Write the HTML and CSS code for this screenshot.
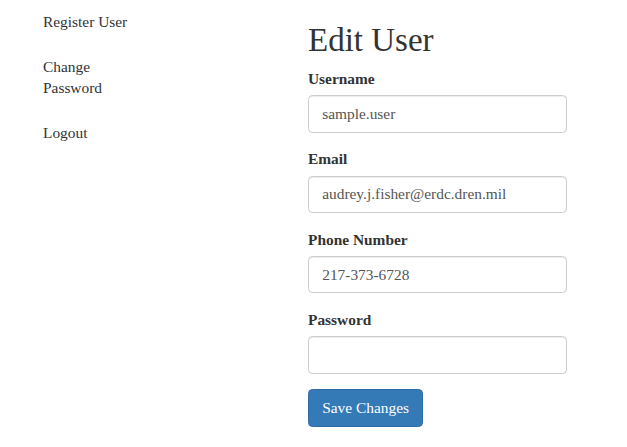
FILE: index.html
```html
<!DOCTYPE html>
<html>
<head>
<meta charset="utf-8">
<link rel="stylesheet" href="styles.css">
</head>
<body>
<div class="page">
  <nav class="sidebar">
    <a class="nav-link" href="#">Register User</a>
    <a class="nav-link" href="#">Change<br>Password</a>
    <a class="nav-link" href="#">Logout</a>
  </nav>
  <main class="main">
    <h2 class="title">Edit User</h2>
    <form class="form">
      <div class="form-group">
        <label class="label">Username</label>
        <input class="input" type="text" value="sample.user">
      </div>
      <div class="form-group">
        <label class="label">Email</label>
        <input class="input" type="text" value="audrey.j.fisher@erdc.dren.mil">
      </div>
      <div class="form-group">
        <label class="label">Phone Number</label>
        <input class="input" type="text" value="217-373-6728">
      </div>
      <div class="form-group">
        <label class="label">Password</label>
        <input class="input" type="password" value="">
      </div>
      <button class="btn" type="button">Save Changes</button>
    </form>
  </main>
</div>
</body>
</html>
```
FILE: styles.css
```css
html, body {
  margin: 0;
  padding: 0;
  background: #fff;
}
body {
  font-family: "Liberation Serif", serif;
  font-size: 15.4px;
  color: #333;
}
.page {
  display: flex;
  flex-direction: row;
}
.sidebar {
  width: 308px;
  box-sizing: border-box;
  padding-left: 43px;
  display: flex;
  flex-direction: column;
  gap: 1px;
}
.nav-link {
  display: block;
  padding: 10.5px 0 12.5px;
  line-height: 21px;
  font-family: "Liberation Serif", serif;
  color: #333;
  text-decoration: none;
}
.main {
  width: 259px;
}
.title {
  margin: 22px 0 9.5px;
  font-family: "Liberation Serif", serif;
  font-size: 33px;
  font-weight: normal;
  line-height: 36.3px;
  color: #333;
}
.form {
  margin: 0;
}
.form-group {
  margin-bottom: 15.5px;
}
.label {
  display: inline-block;
  margin-bottom: 5.5px;
  font-family: "Liberation Serif", serif;
  font-weight: bold;
  line-height: 22px;
}
.input {
  display: block;
  width: 100%;
  height: 37.4px;
  box-sizing: border-box;
  padding: 6.6px 13.2px;
  font-family: "Liberation Serif", serif;
  font-size: 15.4px;
  line-height: 22px;
  color: #555;
  background: #fff;
  border: 1px solid #ccc;
  border-radius: 4.4px;
  box-shadow: inset 0 1px 1px rgba(0, 0, 0, 0.075);
  outline: none;
}
.btn {
  display: inline-block;
  height: 37.4px;
  box-sizing: border-box;
  padding: 6.6px 13.2px;
  font-family: "Liberation Serif", serif;
  font-size: 15.4px;
  line-height: 22px;
  color: #fff;
  background: #337ab7;
  border: 1px solid #2e6da4;
  border-radius: 4.4px;
  cursor: pointer;
}
```
